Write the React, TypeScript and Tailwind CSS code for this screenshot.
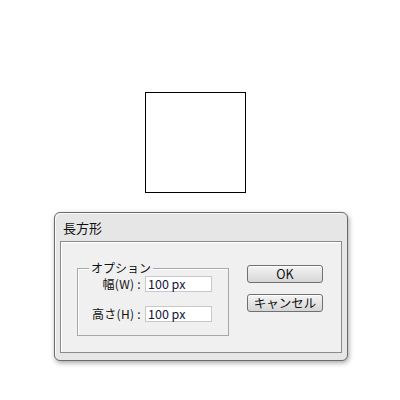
import React from "react";

const font = {
  fontFamily: '"MS UI Gothic", "Noto Sans CJK JP", "Liberation Sans", sans-serif',
};

interface RowProps {
  label: string;
  value: string;
}

const SizeRow: React.FC<RowProps> = ({ label, value }) => (
  <div className="flex items-center">
    <div className="w-[63px] text-right text-[12px] leading-[16px] tracking-[0.3px] text-[#111]">{label}</div>
    <div className="ml-[4px] h-[16px] w-[67px] border border-[#c8c8c8] bg-white pl-[2px] text-[12.5px] leading-[14px] text-[#14143c]">
      {value}
    </div>
  </div>
);

const DlgButton: React.FC<{ children: React.ReactNode }> = ({ children }) => (
  <button className="flex h-[18px] w-[76px] items-center justify-center rounded-[3px] border border-[#707070] bg-gradient-to-b from-[#f4f4f4] to-[#d6d6d6] text-[12.5px] leading-[14px] text-[#111] shadow-[inset_0_1px_0_#ffffff]">
    {children}
  </button>
);

export default function App() {
  return (
    <div className="h-[400px] w-[400px] bg-white pt-[92px]" style={font}>
      <div className="ml-[145px] h-[101px] w-[101px] border border-black" />

      <div className="ml-[54px] mt-[19px] h-[149px] w-[294px] rounded-[6px] border border-[#6a6a6a] bg-[#e6e6e6] shadow-[1px_2px_5px_rgba(0,0,0,0.35),inset_1px_1px_0_#fafafa]">
        <div className="h-[28px] pl-[8px] pt-[8px] text-[13px] leading-[14px] text-[#111]">長方形</div>
        <div className="mx-[5px] flex h-[112px] border border-[#8a8a8a] bg-[#f0f0f0] shadow-[inset_1px_1px_0_#ffffff]">
          <div className="relative ml-[16px] mt-[26px] h-[68px] w-[152px] border border-[#a8a8a8] pt-[7px] shadow-[inset_1px_1px_0_#ffffff]">
            <span className="absolute left-[11px] top-[-8px] bg-[#f0f0f0] px-[2px] text-[12px] leading-[14px] text-[#111]">
              オプション
            </span>
            <div className="flex flex-col gap-[14px]">
              <SizeRow label="幅(W) :" value="100 px" />
              <SizeRow label="高さ(H) :" value="100 px" />
            </div>
          </div>
          <div className="ml-[18px] mt-[23px] flex flex-col gap-[11px]">
            <DlgButton>OK</DlgButton>
            <DlgButton>キャンセル</DlgButton>
          </div>
        </div>
      </div>
    </div>
  );
}
